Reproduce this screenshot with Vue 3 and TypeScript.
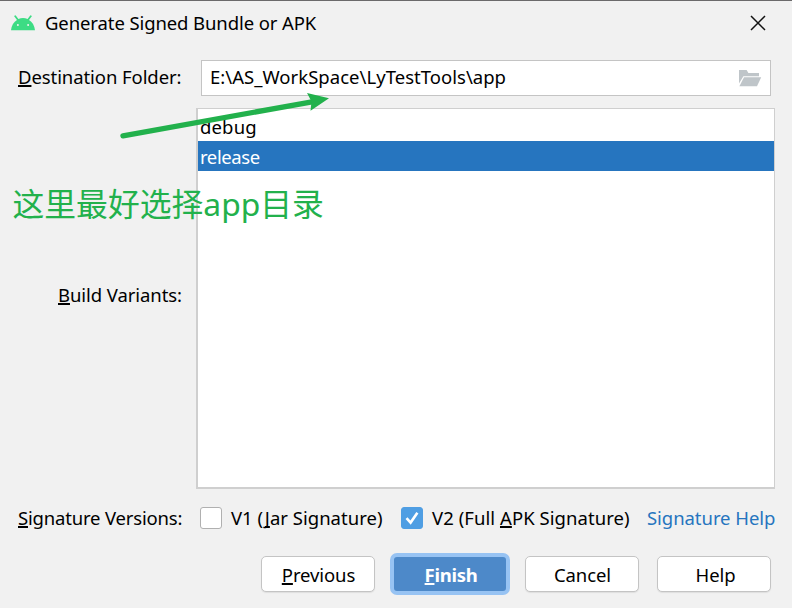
<script setup lang="ts">
import { ref } from 'vue'

const folder = ref('E:\\AS_WorkSpace\\LyTestTools\\app')
const variants = ['debug', 'release']
const selected = ref('release')
const v1 = ref(false)
const v2 = ref(true)
</script>

<template>
  <div class="dialog">
    <header class="titlebar">
      <svg class="android" width="24" height="16" viewBox="0 0 24 16">
        <path d="M0 15.2C.4 10.5 2.8 6.8 6 4.9L3 1 4.6.2 7.4 4Q12 2.2 16.6 4L19.4.2 21 1 18 4.9C21.2 6.8 23.6 10.5 24 15.2Z" fill="#3ddc84" />
        <circle cx="6.9" cy="10" r="1" fill="#f1f1f1" />
        <circle cx="17.1" cy="10" r="1" fill="#f1f1f1" />
      </svg>
      <h1 class="title">Generate Signed Bundle or APK</h1>
      <svg class="close" width="16" height="16" viewBox="0 0 16 16">
        <path d="M1 1L15 15M15 1L1 15" stroke="#111" stroke-width="1.5" />
      </svg>
    </header>

    <div class="row folder-row">
      <label class="label dest"><u>D</u>estination Folder:</label>
      <div class="field">
        <span class="path">{{ folder }}</span>
        <svg width="24" height="18" viewBox="0 0 24 18" fill="#bfc5c9">
          <path d="M1 1H8.6L10.4 4H21V7.2H5.4L1 14.5Z" />
          <path d="M6 8.2H23.2L19 17.2H1.4Z" />
        </svg>
      </div>
    </div>

    <div class="row variants-row">
      <label class="label build"><u>B</u>uild Variants:</label>
      <div class="list">
        <div
          v-for="item in variants"
          :key="item"
          class="item"
          :class="[item, { selected: item === selected }]"
          @click="selected = item"
        ><span>{{ item }}</span></div>
      </div>
    </div>

    <div class="row signature-row">
      <label class="label sig"><u>S</u>ignature Versions:</label>
      <span class="check" :class="{ on: v1 }" @click="v1 = !v1">
        <svg v-if="v1" width="22" height="22" viewBox="0 0 22 22"><path d="M5.5 11.2L9.6 15.6L16.4 5.8" /></svg>
      </span>
      <span class="opt1">V1 (<u>J</u>ar Signature)</span>
      <span class="check" :class="{ on: v2 }" @click="v2 = !v2">
        <svg v-if="v2" width="22" height="22" viewBox="0 0 22 22"><path d="M5.5 11.2L9.6 15.6L16.4 5.8" /></svg>
      </span>
      <span class="opt2">V2 (Full <u>A</u>PK Signature)</span>
      <a class="link">Signature Help</a>
    </div>

    <footer class="actions">
      <button class="btn previous"><span><u>P</u>revious</span></button>
      <button class="btn primary"><span><u>F</u>inish</span></button>
      <button class="btn cancel"><span>Cancel</span></button>
      <button class="btn help"><span>Help</span></button>
    </footer>

    <svg class="arrow" width="792" height="608" viewBox="0 0 792 608">
      <path d="M123 135.8L312 101.8" stroke="#22b14c" stroke-width="5.4" stroke-linecap="round" />
      <path d="M329 98.2L307 93L311.5 101.5L310.5 110.7Z" fill="#22b14c" />
    </svg>
    <div class="note">这里最好选择<span>app</span>目录</div>
  </div>
</template>

<style>
body {
  margin: 0;
  background: #f1f1f1;
}
</style>

<style scoped>
.dialog {
  position: relative;
  box-sizing: border-box;
  width: 792px;
  height: 608px;
  overflow: hidden;
  border-top: 1px solid #6b6a6b;
  background: #f1f1f1;
  color: #000;
  font: 18.5px/30px "Noto Sans", "Open Sans", "Noto Sans CJK SC", sans-serif;
  white-space: nowrap;
}
u {
  text-decoration: underline;
  text-decoration-thickness: 1.5px;
  text-underline-offset: 1px;
  text-decoration-skip-ink: none;
}
.titlebar {
  display: flex;
  align-items: center;
  height: 44px;
  padding: 0 26px 0 11px;
}
.android {
  margin-right: 10px;
}
.title {
  margin: 0;
  font-size: 18.5px;
  font-weight: 400;
  letter-spacing: -0.1px;
}
.close {
  margin-left: auto;
}
.row {
  display: flex;
  align-items: center;
}
.label {
  box-sizing: border-box;
  flex: none;
  padding-left: 18px;
}
.folder-row {
  height: 36px;
  margin-top: 15px;
}
.folder-row .label {
  width: 201px;
  padding-bottom: 2px;
  letter-spacing: -0.08px;
}
.field {
  box-sizing: border-box;
  display: flex;
  align-items: center;
  justify-content: space-between;
  width: 570px;
  height: 36px;
  padding: 0 8px;
  border: 1px solid #c4c4c4;
  background: #fff;
}
.path {
  padding-bottom: 2px;
  letter-spacing: 0.03px;
}
.variants-row {
  height: 381px;
  margin-top: 12px;
}
.variants-row .label {
  width: 196px;
  padding: 0 0 8px 58px;
  letter-spacing: -0.07px;
}
.list {
  box-sizing: border-box;
  width: 579px;
  height: 381px;
  padding-top: 2px;
  border: 1px solid #cfcfcf;
  border-width: 1px 1px 2px 2px;
  background: #fff;
}
.item {
  box-sizing: border-box;
  height: 30px;
  padding: 1px 0 0 2px;
}
.item.debug {
  letter-spacing: 0.15px;
}
.item.selected {
  background: #2675bf;
  color: #fff;
  letter-spacing: -0.4px;
}
.signature-row {
  height: 30px;
  margin-top: 14px;
}
.signature-row .label {
  width: 200px;
  letter-spacing: -0.18px;
}
.check {
  box-sizing: border-box;
  flex: none;
  width: 22px;
  height: 22px;
  border: 1px solid #b0b0b0;
  border-radius: 3px;
  background: #fff;
}
.check.on {
  border-color: #4f9ee3;
  background: #4f9ee3;
}
.check svg {
  display: block;
  margin: -1px;
  fill: none;
  stroke: #fff;
  stroke-width: 2.6;
}
.opt1,
.opt2 {
  box-sizing: border-box;
  flex: none;
  padding-left: 9px;
  letter-spacing: 0.06px;
}
.opt1 {
  width: 179px;
  letter-spacing: 0.02px;
}
.opt2 {
  width: 224px;
}
.link {
  color: #2675bf;
  letter-spacing: -0.05px;
}
.actions {
  display: flex;
  align-items: center;
  justify-content: flex-end;
  height: 42px;
  margin-top: 20px;
  padding-right: 21px;
}
.btn {
  box-sizing: border-box;
  width: 114px;
  height: 36px;
  padding: 2px 0 0 1px;
  border: 1px solid #c4c4c4;
  border-radius: 5px;
  background: #fff;
  box-shadow: 0 1px 1px #dedede;
  color: #000;
  font: inherit;
  letter-spacing: -0.1px;
}
.btn.primary {
  width: 120px;
  height: 42px;
  margin: 0 15px;
  padding-left: 2px;
  border: 4px solid #97c3f3;
  border-radius: 7px;
  background: #4d89c9;
  box-shadow: none;
  color: #fff;
  font-weight: 700;
  letter-spacing: -0.3px;
}
.btn.help {
  margin-left: 18px;
  padding-left: 3px;
}
.arrow {
  position: absolute;
  top: -1px;
  left: 0;
  fill: none;
  pointer-events: none;
}
.note {
  position: absolute;
  top: 177px;
  left: 12.5px;
  color: #22b14c;
  font: 31.8px/48px "Noto Sans CJK SC", sans-serif;
}
.note span {
  font-family: "Noto Sans", sans-serif;
}
</style>
